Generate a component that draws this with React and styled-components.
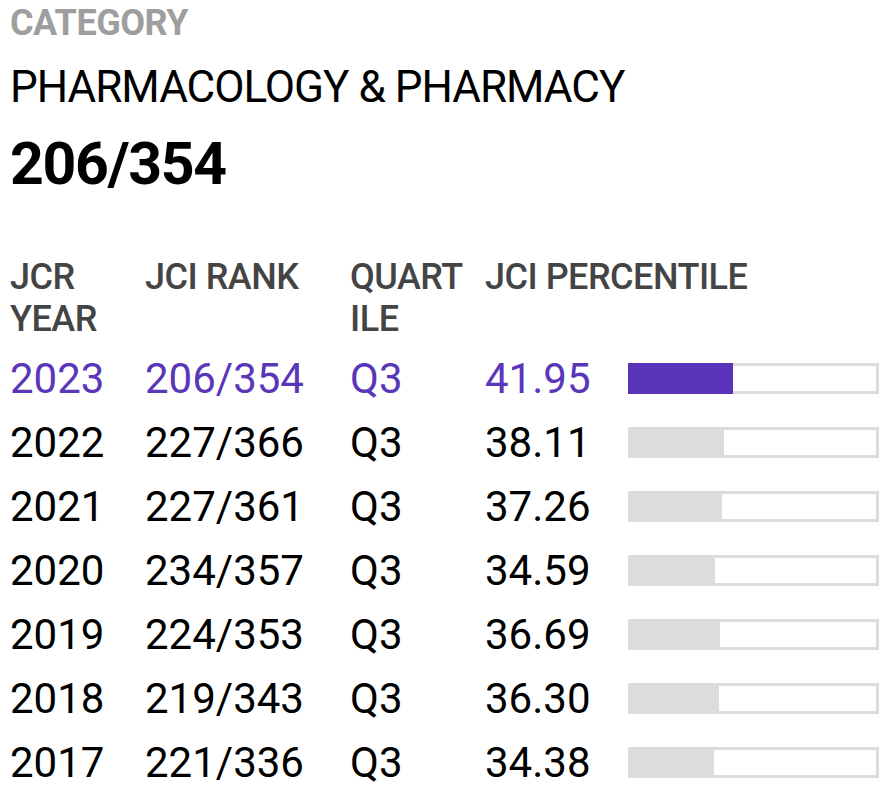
import React from "react";
import styled, { createGlobalStyle } from "styled-components";

const Global = createGlobalStyle`
  html, body { margin: 0; padding: 0; background: #fff; overflow: hidden; }
  body { font-family: Roboto, "Noto Sans", sans-serif; }
`;

const Page = styled.div`
  padding: 0 10px;
  width: 892px;
  box-sizing: border-box;
`;

const Label = styled.div`
  font-size: 36px;
  font-weight: 700;
  color: #9e9e9e;
  line-height: 46px;
  letter-spacing: -0.5px;
`;

const CategoryName = styled.div`
  font-size: 44px;
  color: #000;
  line-height: 52px;
  margin-top: 15px;
  letter-spacing: -1px;
`;

const BigRank = styled.div`
  font-size: 59px;
  font-weight: 700;
  color: #000;
  line-height: 70px;
  margin-top: 16px;
  letter-spacing: -1.3px;
`;

const Table = styled.div`
  display: grid;
  grid-template-columns: 135px 205px 135px 143px 251px;
  margin-top: 57px;
`;

const HeadCell = styled.div`
  font-size: 36px;
  font-weight: 500;
  color: #444;
  line-height: 42px;
  letter-spacing: -0.5px;
  padding-bottom: 7px;
  white-space: ${(p) => (p.$nowrap ? "nowrap" : "normal")};
  grid-column: ${(p) => p.$span || "auto"};
`;

const Cell = styled.div`
  font-size: 42px;
  line-height: 64px;
  color: ${(p) => (p.$active ? "#5a37b8" : "#000")};
  white-space: nowrap;
`;

const BarCell = styled.div`
  display: flex;
  align-items: center;
  height: 64px;
`;

const Bar = styled.div`
  width: 251px;
  height: 31px;
  margin-top: -1px;
  box-sizing: border-box;
  border: 3px solid #dcdcdc;
  background: #fff;
  display: flex;
`;

const Fill = styled.div`
  margin: -3px 0 -3px -3px;
  background: ${(p) => (p.$active ? "#5a34b8" : "#dcdcdc")};
`;

const rows = [
  ["2023", "206/354", "Q3", "41.95"],
  ["2022", "227/366", "Q3", "38.11"],
  ["2021", "227/361", "Q3", "37.26"],
  ["2020", "234/357", "Q3", "34.59"],
  ["2019", "224/353", "Q3", "36.69"],
  ["2018", "219/343", "Q3", "36.30"],
  ["2017", "221/336", "Q3", "34.38"],
];

export default function App() {
  return (
    <Page>
      <Global />
      <Label>CATEGORY</Label>
      <CategoryName>PHARMACOLOGY &amp; PHARMACY</CategoryName>
      <BigRank>206/354</BigRank>
      <Table>
        <HeadCell>JCR YEAR</HeadCell>
        <HeadCell>JCI RANK</HeadCell>
        <HeadCell>QUART<wbr />ILE</HeadCell>
        <HeadCell $nowrap $span="span 2">JCI PERCENTILE</HeadCell>
        {rows.map((r, i) => (
          <React.Fragment key={r[0]}>
            <Cell $active={i === 0}>{r[0]}</Cell>
            <Cell $active={i === 0}>{r[1]}</Cell>
            <Cell $active={i === 0}>{r[2]}</Cell>
            <Cell $active={i === 0}>{r[3]}</Cell>
            <BarCell>
              <Bar>
                <Fill $active={i === 0} style={{ width: `${(parseFloat(r[3]) / 100) * 251}px` }} />
              </Bar>
            </BarCell>
          </React.Fragment>
        ))}
      </Table>
    </Page>
  );
}
